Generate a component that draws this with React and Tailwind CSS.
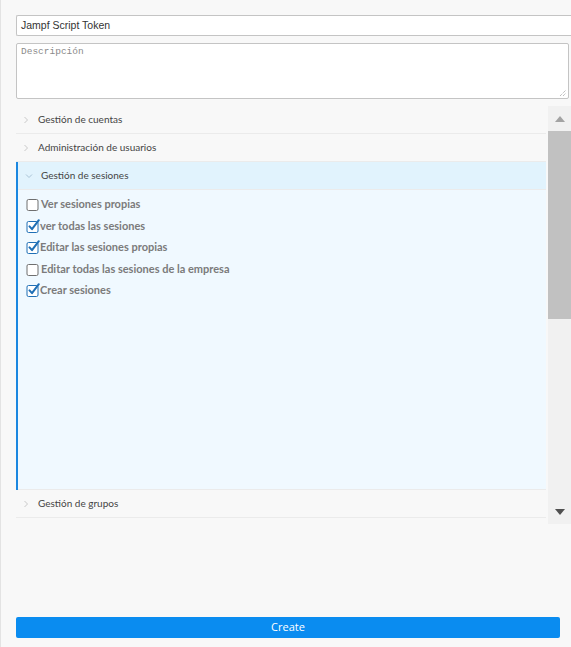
import { useState } from 'react'

const SECCIONES = [
  { id: 'cuentas', label: 'Gestión de cuentas' },
  { id: 'usuarios', label: 'Administración de usuarios' },
  { id: 'sesiones', label: 'Gestión de sesiones' },
  { id: 'grupos', label: 'Gestión de grupos' },
]

const PERMISOS_SESIONES = [
  { id: 'ver_propias', label: 'Ver sesiones propias', activo: false },
  { id: 'ver_todas', label: 'ver todas las sesiones', activo: true },
  { id: 'editar_propias', label: 'Editar las sesiones propias', activo: true },
  { id: 'editar_empresa', label: 'Editar todas las sesiones de la empresa', activo: false },
  { id: 'crear', label: 'Crear sesiones', activo: true },
]

function Casilla({ activo }) {
  return (
    <svg width="14" height="14" viewBox="0 0 14 14" className="shrink-0">
      <rect
        x="1"
        y="2.5"
        width="11"
        height="11"
        rx="1.5"
        fill="white"
        stroke={activo ? '#1f6fb5' : '#6f6f6f'}
        strokeWidth="1"
      />
      {activo && (
        <path d="M3.5 7.4 L6 10.2 L12.8 1.2" fill="none" stroke="#1f6fb5" strokeWidth="2" strokeLinecap="round" strokeLinejoin="round" />
      )}
    </svg>
  )
}

function Chevron({ abierto }) {
  return (
    <svg width="8" height="8" viewBox="0 0 8 8" className="shrink-0">
      {abierto ? (
        <path d="M1 2.5 L4 5.5 L7 2.5" fill="none" stroke="#a9c3d6" strokeWidth="1" />
      ) : (
        <path d="M2.5 1 L5.5 4 L2.5 7" fill="none" stroke="#c9c9c9" strokeWidth="1" />
      )}
    </svg>
  )
}

export default function App() {
  const [abierta, setAbierta] = useState('sesiones')
  const [permisos, setPermisos] = useState(PERMISOS_SESIONES)

  function alternar(id) {
    setPermisos(permisos.map(p => (p.id === id ? { ...p, activo: !p.activo } : p)))
  }

  return (
    <div
      className="w-[571px] h-[647px] bg-[#f8f8f8] border-l border-[#e3e3e3] flex flex-col overflow-hidden"
      style={{ fontFamily: '"Open Sans", sans-serif' }}
    >
      {/* Nombre y descripción */}
      <div className="pl-[15px] pt-[15px]">
        <div className="h-[21px] bg-white border border-r-0 border-[#c4c4c4] rounded-l-[2px] flex items-center pl-[4px] text-[10.5px] text-[#333] font-['Liberation_Sans',Arial,sans-serif]">
          Jampf Script Token
        </div>
        <div className="relative mt-[7px] mr-[2px] h-[56px] bg-white border border-[#c4c4c4] rounded-[2px] pl-[4px] pt-[1px] text-[9.5px] text-[#8a8a8a] font-['Liberation_Mono',monospace]">
          Descripción
          <svg width="8" height="8" viewBox="0 0 8 8" className="absolute right-[1px] bottom-[1px]">
            <path d="M1 7 L7 1 M4 7 L7 4" stroke="#8a8a8a" strokeWidth="0.8" strokeDasharray="1 1" />
          </svg>
        </div>
      </div>

      {/* Acordeón de permisos */}
      <div className="ml-[15px] mt-[7px] h-[418px] flex">
        <div className="flex-1 flex flex-col">
          {SECCIONES.map(seccion => {
            const estaAbierta = abierta === seccion.id
            return (
              <div key={seccion.id} className={estaAbierta ? 'flex flex-col border-l-2 border-[#1b87e0]' : ''}>
                <button
                  onClick={() => setAbierta(estaAbierta ? null : seccion.id)}
                  className={`w-full h-[28px] flex items-center text-left text-[10px] text-[#444] border-b border-[#ebebeb] font-['Lato',sans-serif] ${
                    estaAbierta ? 'bg-[#e1f3fd] pl-[7px] gap-[8px]' : 'pl-[6px] gap-[8px]'
                  }`}
                >
                  <Chevron abierto={estaAbierta} />
                  {seccion.label}
                </button>
                {estaAbierta && (
                  <div className="h-[300px] bg-[#f0f9ff] border-b border-[#ebebeb] pt-[7px] pl-[8px] flex flex-col gap-[7px]">
                    {permisos.map(p => (
                      <label
                        key={p.id}
                        onClick={() => alternar(p.id)}
                        className="flex items-center h-[14.5px] text-[11px] font-bold text-[#7b7b7b] cursor-pointer font-['Lato',sans-serif]"
                      >
                        <Casilla activo={p.activo} />
                        <span className={p.activo ? 'ml-[0px]' : 'ml-[1px]'}>{p.label}</span>
                      </label>
                    ))}
                  </div>
                )}
              </div>
            )
          })}
          <div className="flex-1" />
        </div>

        {/* Barra de desplazamiento */}
        <div className="w-[23px] ml-[2px] bg-[#f1f1f1] flex flex-col">
          <div className="h-[25px] flex items-center justify-center">
            <svg width="10" height="6" viewBox="0 0 10 6">
              <path d="M0 6 L5 0 L10 6 Z" fill="#a3a3a3" />
            </svg>
          </div>
          <div className="h-[188px] bg-[#c1c1c1]" />
          <div className="flex-1" />
          <div className="h-[24px] flex items-center justify-center">
            <svg width="10" height="6" viewBox="0 0 10 6">
              <path d="M0 0 L10 0 L5 6 Z" fill="#505050" />
            </svg>
          </div>
        </div>
      </div>

      <div className="flex-1" />

      {/* Acción principal */}
      <div className="pl-[15px] pr-[11px] pb-[9px]">
        <button className="w-full h-[21px] rounded-[2px] bg-[#0a8cf0] text-white text-[11px] font-['Open_Sans',sans-serif] flex items-center justify-center">
          Create
        </button>
      </div>
    </div>
  )
}
